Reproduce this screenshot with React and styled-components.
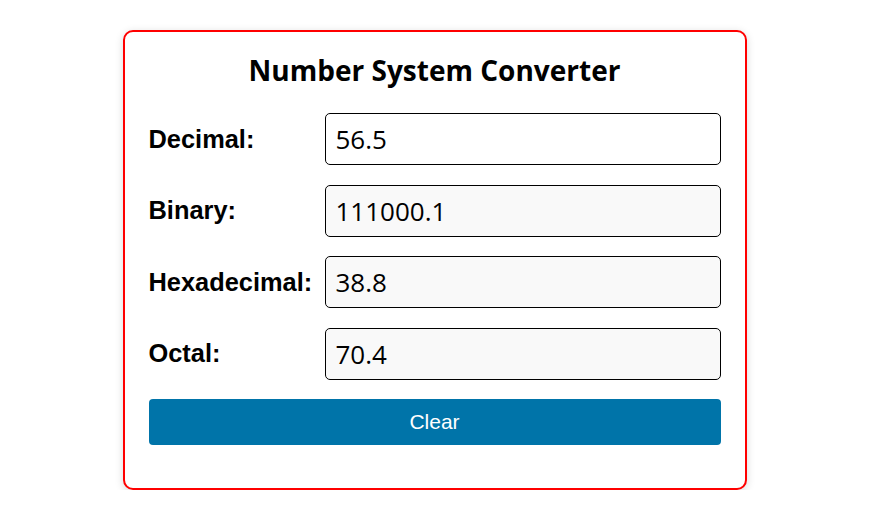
import React, { useState } from "react";
import styled, { createGlobalStyle } from "styled-components";

const GlobalStyle = createGlobalStyle`
  body {
    margin: 0;
    background: #fff;
    font-family: "Liberation Sans", Arial, sans-serif;
  }
`;

const Page = styled.div`
  display: flex;
  justify-content: center;
  padding: 30px 3px 0 0;
`;

const Card = styled.div`
  box-sizing: border-box;
  width: 624px;
  border: 2px solid #ff0000;
  border-radius: 10px;
  padding: 20px 24px 43px;
  background: #fff;
  box-shadow: 0 2px 8px rgba(0, 0, 0, 0.15);
`;

const Title = styled.h2`
  margin: 0 0 25px;
  font-family: "Open Sans", sans-serif;
  font-size: 28px;
  line-height: 36px;
  font-weight: 700;
  text-align: center;
  color: #000;
`;

const Form = styled.div`
  display: grid;
  grid-template-columns: 165px 1fr;
  column-gap: 11px;
  row-gap: 19.5px;
  align-items: center;
`;

const Label = styled.label`
  font-family: "Liberation Sans", Arial, sans-serif;
  font-size: 25.4px;
  font-weight: 700;
  color: #000;
  white-space: nowrap;
`;

const Field = styled.input`
  box-sizing: border-box;
  width: 100%;
  height: 52px;
  padding: 0 10px;
  border: 1px solid #000;
  border-radius: 5px;
  background: ${props => (props.readOnly ? "#f9f9f9" : "#fff")};
  font-family: "Open Sans", sans-serif;
  font-size: 26px;
  color: #000;
  outline: none;
`;

const ClearButton = styled.button`
  display: block;
  width: 100%;
  height: 46px;
  margin-top: 19px;
  border: none;
  border-radius: 4px;
  background: #0074a9;
  color: #fff;
  font-family: "Liberation Sans", Arial, sans-serif;
  font-size: 21px;
  cursor: pointer;
`;

const fields = [
  { key: "decimal", label: "Decimal:", readOnly: false },
  { key: "binary", label: "Binary:", readOnly: true },
  { key: "hex", label: "Hexadecimal:", readOnly: true },
  { key: "octal", label: "Octal:", readOnly: true },
];

export default function App() {
  const [values, setValues] = useState({
    decimal: "56.5",
    binary: "111000.1",
    hex: "38.8",
    octal: "70.4",
  });

  return (
    <Page>
      <GlobalStyle />
      <Card>
        <Title>Number System Converter</Title>
        <Form>
          {fields.map(f => (
            <React.Fragment key={f.key}>
              <Label htmlFor={f.key}>{f.label}</Label>
              <Field
                id={f.key}
                value={values[f.key]}
                readOnly={f.readOnly}
                onChange={e => setValues({ ...values, [f.key]: e.target.value })}
              />
            </React.Fragment>
          ))}
        </Form>
        <ClearButton
          onClick={() => setValues({ decimal: "", binary: "", hex: "", octal: "" })}
        >
          Clear
        </ClearButton>
      </Card>
    </Page>
  );
}
